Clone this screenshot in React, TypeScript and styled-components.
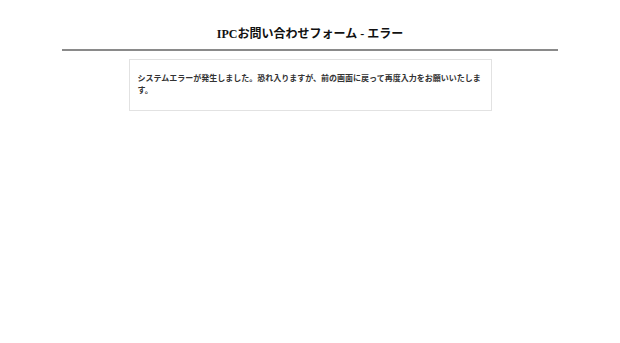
import { FC } from "react";
import styled, { createGlobalStyle } from "styled-components";

const Global = createGlobalStyle`
  html, body {
    margin: 0;
    padding: 0;
    background: #ffffff;
  }
  body {
    font-family: "Liberation Serif", "Noto Sans CJK JP", serif;
    color: #222;
  }
`;

const Page = styled.div`
  width: 496px;
  margin: 0 auto;
  padding-top: 26px;
`;

const Header = styled.h1`
  margin: 0;
  padding-bottom: 7px;
  border-bottom: 2px solid #8a8a8a;
  text-align: center;
  font-size: 12px;
  line-height: 16px;
  font-weight: bold;
  color: #111;
`;

const MessageBox = styled.div`
  width: 346px;
  margin: 8px auto 0;
  padding: 12px 7px 14px 8px;
  border: 1px solid #e2e2e2;
  font-family: "Noto Sans CJK JP", sans-serif;
  font-size: 8px;
  line-height: 12px;
  font-weight: bold;
  color: #333;
`;

const App: FC = () => (
  <>
    <Global />
    <Page>
      <Header>IPCお問い合わせフォーム - エラー</Header>
      <MessageBox>
        システムエラーが発生しました。恐れ入りますが、前の画面に戻って再度入力をお願いいたします。
      </MessageBox>
    </Page>
  </>
);

export default App;
